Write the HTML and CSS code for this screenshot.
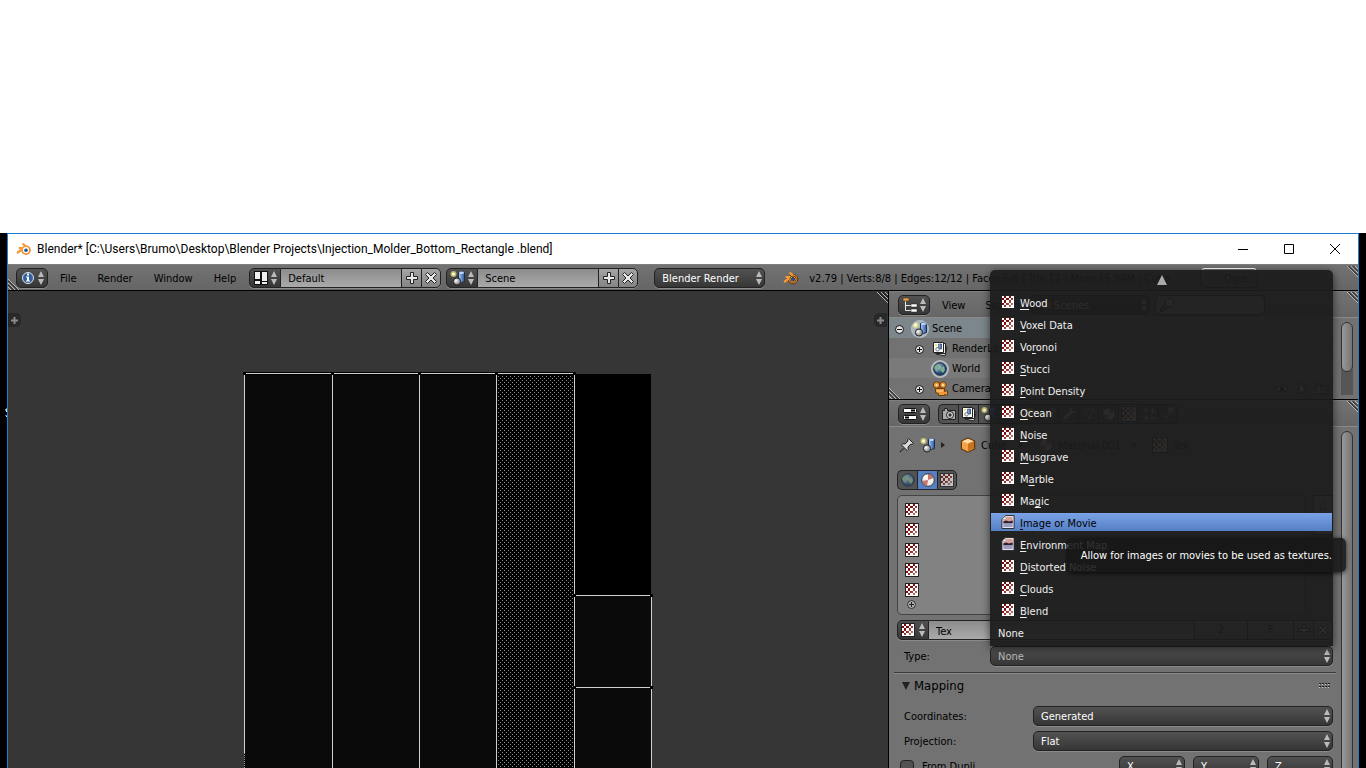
FILE: index.html
```html
<!DOCTYPE html>
<html lang="en">
<head>
<meta charset="utf-8">
<title>Blender</title>
<link rel="stylesheet" href="styles.css">
</head>
<body>
<svg class="defs" aria-hidden="true">
  <defs>
    <linearGradient id="g-blue" x1="0" x2="1"><stop offset="0" stop-color="#a9cbf5"/><stop offset="1" stop-color="#2c569c"/></linearGradient>
    <radialGradient id="g-ball" cx=".35" cy=".35"><stop offset="0" stop-color="#fff"/><stop offset="1" stop-color="#999"/></radialGradient>
    <radialGradient id="g-world" cx=".4" cy=".35"><stop offset="0" stop-color="#a9cde8"/><stop offset="1" stop-color="#24446f"/></radialGradient>
    <linearGradient id="g-check" gradientUnits="userSpaceOnUse" x1="2" y1="2" x2="13" y2="13"><stop offset=".3" stop-color="#780c0c"/><stop offset="1" stop-color="#d8aaa2"/></linearGradient>
    <pattern id="stipple" width="4" height="4" patternUnits="userSpaceOnUse"><path fill="#8c8c8c" d="M2 1h1v1h-1zM0 3h1v1h-1z"/></pattern>
  </defs>
  <symbol id="i-check" viewBox="0 0 14 14"><path fill="#222" d="M0 0h14v14H0z"/><path fill="#fff" d="M1 1h12v12H1z"/><path fill="url(#g-check)" d="M3 1h2v2H3zM8 1h2v2H8zM1 3h2v2H1zM5 3h3v2H5zM10 3h2v2h-2zM3 5h2v3H3zM8 5h2v3H8zM1 8h2v2H1zM5 8h3v2H5zM10 8h2v2h-2zM3 10h2v2H3zM8 10h2v2H8z"/></symbol>
  <symbol id="i-image" viewBox="0 0 14 15"><path fill="#eee" stroke="#222" d="M4.500.5h9v14H.5v-10z"/><path fill="#fff" stroke="#777" stroke-width=".6" d="M4.500.8v4h-4z"/><path fill="#d8a09a" d="M5 2h7v6H2V5h3z"/><path fill="#2a2230" d="M2 7l3-1 3 1 4-1v3H2z"/><path fill="#9c9cc8" d="M2 9h10v4H2z"/></symbol>
  <symbol id="i-updown" viewBox="0 0 6 14"><path d="M3 0l3 6H0zM3 14L0 8h6z"/></symbol>
  <symbol id="i-plus" viewBox="0 0 14 14"><path fill="#e8e8e8" stroke="#222" d="M5.500 1.500h3v4h4v3h-4v4h-3v-4h-4v-3h4z"/></symbol>
  <symbol id="i-x" viewBox="0 0 14 14"><path fill="#e8e8e8" stroke="#222" d="M3.500 1.500L7 5l3.500-3.500 2 2L9 7l3.500 3.500-2 2L7 9l-3.500 3.500-2-2L5 7 1.500 3.500z"/></symbol>
  <symbol id="i-blender" viewBox="0 0 16 14"><g class="edge"><path fill="none" stroke-width="3.400" stroke-linecap="round" d="M1.800 10.500L8 6H3.500M7 2.500L12 6"/><circle cx="10" cy="8.200" r="5.200"/></g><circle cx="10" cy="8.200" r="4.800" fill="#f08a24"/><path fill="none" stroke="#f59a34" stroke-width="2.200" stroke-linecap="round" d="M1.800 10.500L8 6H3.500M7.200 2.200L12 6"/><circle cx="10" cy="8.200" r="3.100" fill="#fff"/><circle cx="10" cy="8.200" r="1.800" fill="#20549c"/></symbol>
  <symbol id="i-scene" viewBox="0 0 16 16"><circle cx="3.500" cy="4" r="3" fill="#f5ef83" opacity=".65"/><circle cx="3.500" cy="4" r="1.500" fill="#ffffd0"/><path fill="url(#g-blue)" stroke="#1c2c50" d="M8.500 2.500q3-2 6 0v9q-3 2-6 0z"/><ellipse cx="11.500" cy="2.800" rx="2.500" ry="1.200" fill="#bcd8fa"/><circle cx="7" cy="11.500" r="3.600" fill="url(#g-ball)" stroke="#222"/></symbol>
  <symbol id="i-world" viewBox="0 0 16 16"><circle cx="8" cy="8" r="6.300" fill="url(#g-world)" stroke="#1c2b44"/><path fill="#7fb08a" d="M3 5l3-2 2 1-1 3-2 1 1 3-2-1-2-3zM9 7l3-2 1 4-2 3-2-2z"/></symbol>
  <symbol id="i-material" viewBox="0 0 16 16"><circle cx="8" cy="8" r="6.300" fill="#f4ecea" stroke="#333"/><path fill="#b5594c" d="M8 2q4 0 5.500 4L8 8zM8 8l-1 6q-4-1-5-5z" opacity=".8"/><circle cx="6" cy="5" r="2" fill="#fff" opacity=".7"/></symbol>
  <symbol id="i-layers" viewBox="0 0 16 16"><path fill="#ddd" stroke="#222" d="M6 4l9 2-2 9-9-2z"/><path fill="#eee" stroke="#222" d="M3.500 2.500h10v10h-10z"/><path fill="#fff" stroke="#222" d="M1.500 1.500h10v10h-10z"/><path fill="url(#g-blue)" stroke="#234" stroke-width=".6" d="M6.500 3h3v5h-3z"/><circle cx="5.500" cy="8.300" r="1.800" fill="#eee" stroke="#333" stroke-width=".6"/><circle cx="4" cy="4" r="1" fill="#e6da50"/></symbol>
  <symbol id="i-camera" viewBox="0 0 16 16"><g fill="#ec9a3c" stroke="#6b3d0c"><circle cx="4.500" cy="4" r="3.200"/><circle cx="11" cy="4" r="3.200"/><path d="M3.500 7.500h9v3l3-1v5l-3-1v1h-6v-2l-3-1z"/></g><circle cx="4.500" cy="4" r="1" fill="#fff0c8"/><circle cx="11" cy="4" r="1" fill="#fff0c8"/><path d="M5 10h6" stroke="#ffd59a"/></symbol>
  <symbol id="i-photo" viewBox="0 0 16 14"><path fill="#aaa" stroke="#222" d="M1.500 3.500h2v-2h3v2h8v9h-13z"/><circle cx="9" cy="8" r="3.500" fill="#ddd" stroke="#222"/><circle cx="9" cy="8" r="1.700" fill="#333"/></symbol>
  <symbol id="i-cube" viewBox="0 0 14 14"><path fill="#f2a24a" stroke="#5c3208" d="M7 .8l5.800 2.700v7L7 13.300 1.200 10.500v-7z"/><path fill="#ffd9a0" d="M7 1.500l5 2.200-5 2.200-5-2.200z"/><path fill="#c9731c" d="M7 6l5.200-2.200v6.300L7 12.500z"/></symbol>
  <symbol id="i-pin" viewBox="0 0 16 16"><path fill="#d8d8d8" stroke="#222" d="M9.500 1.500l5 5-1.500 1-1-.5-3 3 .3 2.500-1 1L5.500 11 2 14.500l-1 .5.500-1L5 10.500 2.500 7.800l1-1L6 7l3-3-.5-1z"/></symbol>
  <symbol id="i-search" viewBox="0 0 16 16"><path stroke="#111" stroke-width="4" stroke-linecap="round" d="M3 13l4-4"/><path stroke="#b87858" stroke-width="2" stroke-linecap="round" d="M3 13l4-4"/><circle cx="10.500" cy="5.500" r="4.500" fill="#b8c0c8" stroke="#111"/></symbol>
  <symbol id="i-grip" viewBox="0 0 11 11"><path fill="none" stroke="#b8b8b8" d="M0 0l11 11M4 0l7 7M8 0l3 3"/><path fill="none" stroke="#111" d="M1.500 0L11 9.500M5.500 0L11 5.500"/></symbol>
  <symbol id="i-grip-low" viewBox="0 0 11 11"><path fill="none" stroke="#b8b8b8" d="M0 0l11 11M0 4l7 7M0 8l3 3"/><path fill="none" stroke="#111" d="M0 1.500L9.500 11M0 5.500L5.500 11"/></symbol>
  <symbol id="i-node" viewBox="0 0 11 11"><circle cx="5.500" cy="5.500" r="4" fill="#e4e4e4" stroke="#111"/><path stroke="#111" d="M3 5.500h5M5.500 3v5"/></symbol>
  <symbol id="i-minus" viewBox="0 0 11 11"><circle cx="5.500" cy="5.500" r="4" fill="#e4e4e4" stroke="#111"/><path stroke="#111" d="M3 5.500h5"/></symbol>
  <symbol id="i-arrow" viewBox="0 0 4 6"><path fill="#222" d="M0 0l4 3-4 3z"/></symbol>
  <symbol id="i-tab" viewBox="0 0 7 7"><path fill="#8a8a8a" d="M2.500 0h2v2.500H7v2H4.500V7h-2V4.500H0v-2h2.500z"/></symbol>
</svg>

<div class="desktop">
<svg class="sliver" viewBox="0 0 3 9" aria-hidden="true"><path fill="#6a7f92" d="M1 0h2v1H1zM0 1h1v2H0zM0 7h2v1H0z"/><path fill="#e8d070" d="M1 1h2v2H1z"/><path fill="#ddd" d="M1 3h1v1H1zM1 8h2v1H1z"/></svg>
<main class="window">
  <div class="titlebar">
    <svg class="logo"><use href="#i-blender"/></svg>
    <h1>Blender* [C:\Users\Brumo\Desktop\Blender Projects\Injection_Molder_Bottom_Rectangle .blend]</h1>
    <button class="winbtn" aria-label="Minimize"><svg viewBox="0 0 10 10"><path d="M0 5.500h10"/></svg></button>
    <button class="winbtn" aria-label="Maximize"><svg viewBox="0 0 10 10"><path d="M.5.500h9v9h-9z"/></svg></button>
    <button class="winbtn" aria-label="Close"><svg viewBox="0 0 10 10"><path d="M0 0l10 10M10 0L0 10"/></svg></button>
  </div>

  <header class="bar info">
    <svg class="grip bottom-left"><use href="#i-grip-low"/></svg>
    <svg class="grip top-right"><use href="#i-grip"/></svg>
    <button class="type" aria-label="Info editor"><svg class="ic" viewBox="0 0 16 16"><circle cx="8" cy="8" r="5.500" fill="#34609c" stroke="#dce6f2"/><path fill="#fff" d="M7 3.500h2v2H7zM6 6.500h3v4h1v1H6v-1h1v-3H6z"/></svg><svg class="ud"><use href="#i-updown"/></svg></button>
    <nav class="menus"><button>File</button><button>Render</button><button>Window</button><button>Help</button></nav>
    <div class="group">
      <button class="type" aria-label="Screen layout"><svg class="ic" viewBox="0 0 16 16"><path fill="#111" d="M1 1h14v14H1z"/><path fill="#f0f0f0" d="M2 2h5v7H2zM2 11h5v3H2zM9 2h5v9H9zM9 12h5v2H9z"/></svg><svg class="ud"><use href="#i-updown"/></svg></button>
      <input aria-label="Screen" value="Default"><button class="sq" aria-label="Add screen"><svg><use href="#i-plus"/></svg></button><button class="sq" aria-label="Delete screen"><svg><use href="#i-x"/></svg></button>
    </div>
    <div class="group second">
      <button class="type" aria-label="Browse scene"><svg class="ic"><use href="#i-scene"/></svg><svg class="ud"><use href="#i-updown"/></svg></button>
      <input aria-label="Scene" value="Scene"><button class="sq" aria-label="Add scene"><svg><use href="#i-plus"/></svg></button><button class="sq" aria-label="Delete scene"><svg><use href="#i-x"/></svg></button>
    </div>
    <span class="select engine"><select aria-label="Render engine"><option>Blender Render</option></select><svg class="ud"><use href="#i-updown"/></svg></span>
    <svg class="logo dark"><use href="#i-blender"/></svg>
    <p class="stats">v2.79 | Verts:8/8 | Edges:12/12 | Faces:6/6 | Tris:12 | Mem:15.94M | Cube</p>
    <button class="ogre">Ogre</button>
  </header>

  <div class="work">
    <section class="uv">
      <svg class="grip top-right"><use href="#i-grip"/></svg>
      <svg class="canvas" aria-label="UV layout">
        <path fill="#0a0a0a" d="M236 83h252v600H236z"/>
        <path fill="#000" d="M488 83h155v222H488z"/>
        <path fill="#000" d="M488 83h78v600h-78z"/>
        <path fill="url(#stipple)" d="M490 85h75v600h-75z"/>
        <path fill="#0a0a0a" d="M567 305h76v400h-76z"/>
        <path fill="none" stroke="#000" stroke-width="3" d="M236 82.500h331"/>
        <path fill="none" stroke="#d0d0d0" d="M237 82.500h329M236.500 84v378M324.500 84v600M411.500 84v600M488.500 84v600M566.500 84v600M567 304.500h76M567 396.500h76M643.500 305v400"/>
        <path stroke="#999" stroke-dasharray="1 1" d="M236.500 462v300"/>
        <path d="M235 81h3v3h-3zM323 81h3v3h-3zM410 81h3v3h-3zM487 81h3v3h-3zM565 81h3v3h-3zM565 303h3v3h-3zM642 303h3v3h-3zM565 395h3v3h-3zM642 395h3v3h-3z"/>
      </svg>
      <button class="tab left" aria-label="Show tool shelf"><svg><use href="#i-tab"/></svg></button>
      <button class="tab right" aria-label="Show properties"><svg><use href="#i-tab"/></svg></button>
    </section>

    <aside class="side">
      <section class="outliner">
        <svg class="grip top-right"><use href="#i-grip"/></svg>
        <svg class="grip bottom-left"><use href="#i-grip-low"/></svg>
        <header class="bar">
          <button class="type" aria-label="Outliner"><svg class="ic" viewBox="0 0 16 16"><path fill="none" stroke="#e8e8e8" d="M3.500 4v9.500H9M3.500 8.500H9"/><path fill="#f0a040" stroke="#222" stroke-width=".5" d="M1 1h6v3H1z"/><path fill="#fff" stroke="#222" stroke-width=".5" d="M9 7h6v3H9zM9 12h6v3H9z"/></svg><svg class="ud"><use href="#i-updown"/></svg></button>
          <nav class="menus"><button>View</button><button>Search</button></nav>
          <span class="select scenes"><select aria-label="Display mode"><option>All Scenes</option></select><svg class="ud"><use href="#i-updown"/></svg></span>
          <label class="find"><svg class="ic"><use href="#i-search"/></svg><input aria-label="Filter"></label>
        </header>
        <div class="treewrap">
          <ul class="tree">
            <li class="on"><svg class="node"><use href="#i-minus"/></svg><svg class="ic halo"><use href="#i-scene"/></svg>Scene</li>
            <li class="sub"><svg class="node"><use href="#i-node"/></svg><svg class="ic"><use href="#i-layers"/></svg>RenderLayers</li>
            <li class="sub"><i class="node"></i><svg class="ic halo"><use href="#i-world"/></svg>World</li>
            <li class="sub"><svg class="node"><use href="#i-node"/></svg><svg class="ic"><use href="#i-camera"/></svg>Camera
              <span class="toggles"><svg viewBox="0 0 14 14"><path fill="#ccc" stroke="#222" d="M1 7q6-7 12 0-6 6-12 0z"/><circle cx="7" cy="7" r="2.200"/></svg><svg viewBox="0 0 14 14"><path fill="#ddd" stroke="#222" d="M4 1v11l3-3 2 4 1-1-1.500-4H12z"/></svg><svg viewBox="0 0 16 14"><use href="#i-photo"/></svg></span></li>
          </ul>
          <div class="scroll"><i class="thumb short"></i></div>
        </div>
      </section>

      <section class="props">
        <svg class="grip top-right"><use href="#i-grip"/></svg>
        <header class="bar">
          <button class="type" aria-label="Properties"><svg class="ic" viewBox="0 0 16 16"><rect x="1.500" y="2.500" width="13" height="4" rx="1" fill="#fff" stroke="#111"/><path d="M9 3.500h4v2H9z"/><rect x="1.500" y="9.500" width="13" height="4" rx="1" fill="#fff" stroke="#111"/><path d="M3 10.500h4v2H3z"/></svg><svg class="ud"><use href="#i-updown"/></svg></button>
          <div class="contexts">
            <button aria-label="Render"><svg><use href="#i-photo"/></svg></button><button aria-label="Render layers"><svg><use href="#i-layers"/></svg></button><button aria-label="Scene"><svg><use href="#i-scene"/></svg></button><button aria-label="World"><svg><use href="#i-world"/></svg></button><button aria-label="Object"><svg><use href="#i-cube"/></svg></button><button aria-label="Constraints"><svg viewBox="0 0 16 16"><path fill="none" stroke="#bbb" stroke-width="2" d="M2 11l4-4 2 2-3 4zM8 6l3-3 3 2-4 4z"/></svg></button><button aria-label="Modifiers"><svg viewBox="0 0 16 16"><path stroke="#bcd" stroke-width="3" d="M3 13l7-7"/><path fill="none" stroke="#bcd" stroke-width="2" d="M10 2q-2 5 4 4"/></svg></button><button aria-label="Data"><svg viewBox="0 0 16 16"><path fill="none" stroke="#bbb" d="M3 3h10l-5 10z"/></svg></button><button aria-label="Material"><svg><use href="#i-material"/></svg></button><button class="on" aria-label="Texture"><svg><use href="#i-check"/></svg></button><button aria-label="Particles"><svg viewBox="0 0 16 16"><path stroke="#dda" d="M2 4h5M4.500 2v5M9 5h5M11.500 2v5M3 12h5M5.500 9v5M10 12h5"/></svg></button><button aria-label="Physics"><svg viewBox="0 0 16 16"><path fill="none" stroke="#89b" stroke-width="2" d="M2 7l4 5 5-7"/><circle cx="11" cy="4" r="3" fill="#bbb"/></svg></button>
          </div>
        </header>
        <div class="propwrap">
          <div class="panel">
            <div class="crumbs"><svg class="ic"><use href="#i-pin"/></svg><svg class="ic"><use href="#i-scene"/></svg><svg class="ar"><use href="#i-arrow"/></svg><svg class="ic"><use href="#i-cube"/></svg><span>Cube</span><svg class="ar"><use href="#i-arrow"/></svg><svg class="ic"><use href="#i-material"/></svg><span>Material.001</span><svg class="ar"><use href="#i-arrow"/></svg><svg class="ic"><use href="#i-check"/></svg><span>Tex</span></div>
            <div class="contexts small"><button aria-label="World textures"><svg><use href="#i-world"/></svg></button><button class="on" aria-label="Material textures"><svg><use href="#i-material"/></svg></button><button aria-label="Other textures"><svg class="chk"><use href="#i-check"/></svg></button></div>
            <div class="slots">
              <ul><li><svg><use href="#i-check"/></svg></li><li><svg><use href="#i-check"/></svg></li><li><svg><use href="#i-check"/></svg></li><li><svg><use href="#i-check"/></svg></li><li><svg><use href="#i-check"/></svg></li><li class="more"><svg viewBox="0 0 9 9"><circle cx="4.500" cy="4.500" r="4" fill="#aaa" stroke="#333"/><path stroke="#222" d="M2 4.500h5M4.500 2v5"/></svg></li></ul>
              <div class="steps"><button aria-label="Move up">△</button><button aria-label="Move down">▽</button></div>
            </div>
            <div class="group texid">
              <button class="type" aria-label="Browse texture"><svg class="ic"><use href="#i-check"/></svg><svg class="ud"><use href="#i-updown"/></svg></button>
              <input aria-label="Texture name" value="Tex"><button class="users">2</button><button class="fake">F</button><button class="sq" aria-label="Add texture"><svg><use href="#i-plus"/></svg></button><button class="sq" aria-label="Unlink texture"><svg><use href="#i-x"/></svg></button>
            </div>
            <div class="row typerow">
              <label for="ttype">Type:</label>
              <div class="select open"><select id="ttype"><option>None</option></select><svg class="ud"><use href="#i-updown"/></svg>
                <div class="popup">
                  <svg class="more" viewBox="0 0 10 10"><path fill="#aaa" d="M5 0l5 10H0z"/></svg>
                  <ul>
                    <li><button><svg><use href="#i-check"/></svg><span><u>W</u>ood</span></button></li>
                    <li><button><svg><use href="#i-check"/></svg><span><u>V</u>oxel Data</span></button></li>
                    <li><button><svg><use href="#i-check"/></svg><span>Vo<u>r</u>onoi</span></button></li>
                    <li><button><svg><use href="#i-check"/></svg><span><u>S</u>tucci</span></button></li>
                    <li><button><svg><use href="#i-check"/></svg><span><u>P</u>oint Density</span></button></li>
                    <li><button><svg><use href="#i-check"/></svg><span><u>O</u>cean</span></button></li>
                    <li><button><svg><use href="#i-check"/></svg><span><u>N</u>oise</span></button></li>
                    <li><button><svg><use href="#i-check"/></svg><span><u>M</u>usgrave</span></button></li>
                    <li><button><svg><use href="#i-check"/></svg><span>M<u>a</u>rble</span></button></li>
                    <li><button><svg><use href="#i-check"/></svg><span>Ma<u>g</u>ic</span></button></li>
                    <li class="on"><button><svg><use href="#i-image"/></svg><span><u>I</u>mage or Movie</span></button><div class="tip" role="tooltip">Allow for images or movies to be used as textures.</div></li>
                    <li><button><svg><use href="#i-image"/></svg><span><u>E</u>nvironment Map</span></button></li>
                    <li><button><svg><use href="#i-check"/></svg><span><u>D</u>istorted Noise</span></button></li>
                    <li><button><svg><use href="#i-check"/></svg><span><u>C</u>louds</span></button></li>
                    <li><button><svg><use href="#i-check"/></svg><span><u>B</u>lend</span></button></li>
                    <li class="none"><button><span>None</span></button></li>
                  </ul>
                </div>
              </div>
            </div>
            <h2 class="heading"><svg class="tri" viewBox="0 0 8 8"><path fill="#222" d="M0 0h8L4 8z"/></svg>Mapping<svg class="dots" viewBox="0 0 11 5"><path stroke="#222" stroke-dasharray="2 1" d="M0 .5h11M0 3.500h11"/><path stroke="#ccc" stroke-dasharray="1 2" d="M0 1.500h11M0 4.500h11"/></svg></h2>
            <div class="row"><label for="coords">Coordinates:</label><div class="select"><select id="coords"><option>Generated</option></select><svg class="ud"><use href="#i-updown"/></svg></div></div>
            <div class="row"><label for="proj">Projection:</label><div class="select"><select id="proj"><option>Flat</option></select><svg class="ud"><use href="#i-updown"/></svg></div></div>
            <div class="row dupli"><label class="tick"><input type="checkbox">From Dupli</label>
              <div class="axes"><span class="select"><select aria-label="X mapping"><option>X</option></select><svg class="ud"><use href="#i-updown"/></svg></span><span class="select"><select aria-label="Y mapping"><option>Y</option></select><svg class="ud"><use href="#i-updown"/></svg></span><span class="select"><select aria-label="Z mapping"><option>Z</option></select><svg class="ud"><use href="#i-updown"/></svg></span></div></div>
          </div>
          <div class="scroll"><i class="thumb"></i></div>
        </div>
      </section>
    </aside>
  </div>
</main>
</div>
</body>
</html>
```
FILE: styles.css
```css
* { box-sizing: border-box; }
body {
  margin: 0;
  height: 100vh;
  overflow: hidden;
  background: #fff;
  padding-top: 233px;
  font: 11px/14px "DejaVu Sans Condensed", "DejaVu Sans", sans-serif;
  color: #000;
}
ul { list-style: none; margin: 0; padding: 0; }
h1, h2, p { margin: 0; font-weight: normal; }
button, input, select { font: inherit; color: inherit; margin: 0; padding: 0; border: 0; background: none; border-radius: 0; outline: 0; }
svg { display: block; flex: none; }
.defs { position: absolute; width: 0; height: 0; }

.desktop { position: relative; height: 100%; background: #000; padding: 0 7px; }
.sliver { position: absolute; left: 5px; top: 175px; width: 3px; height: 9px; }
.window {
  position: relative;
  display: flex;
  flex-direction: column;
  height: 100%;
  border: 1px solid #1c7ed2;
  border-bottom: 0;
}

.titlebar { display: flex; align-items: center; height: 30px; background: #fff; padding-left: 8px; flex: none; }
.titlebar h1 { flex: 1; padding-left: 5px; font: 12px/16px Roboto, "Noto Sans", sans-serif; white-space: nowrap; }
.logo { width: 16px; height: 14px; }
.edge { fill: none; stroke: none; }
.dark { fill: #5c3208; stroke: #5c3208; }
.winbtn { width: 46px; height: 30px; display: grid; place-items: center; }
.winbtn svg { width: 10px; height: 10px; fill: none; stroke: #000; }

.bar {
  position: relative;
  display: flex;
  align-items: center;
  height: 26px;
  flex: none;
  padding-left: 9px;
  background: linear-gradient(#727272, #666);
  border-top: 1px solid #7e7e7e;
}
.info { height: 27px; padding-left: 8px; border-bottom: 1px solid #000; }

.grip { position: absolute; width: 11px; height: 11px; z-index: 1; }
.grip.top-right { top: 1px; right: 0; }
.grip.bottom-left { bottom: 0; left: 0; }

.type {
  display: flex;
  align-items: center;
  justify-content: space-between;
  width: 32px;
  height: 20px;
  padding: 0 3px;
  border: 1px solid #222;
  border-radius: 5px;
  background: linear-gradient(#525252, #363636);
  box-shadow: 0 1px 0 #8a8a8a;
}
.ic { width: 16px; height: 16px; }
.ud { width: 6px; height: 14px; fill: #bbb; }

.menus { display: flex; gap: 21px; padding: 2px 13px 0 12px; }

.group { display: flex; }
.group.second { margin-left: 5px; }
.group .type { border-radius: 5px 0 0 5px; }
.group input {
  width: 120px;
  height: 20px;
  padding: 2px 7px 0;
  border: solid #222;
  border-width: 1px 0;
  background: linear-gradient(#8c8c8c, #aaa);
  box-shadow: 0 1px 0 #8a8a8a;
}
.sq, .users, .fake {
  display: grid;
  place-items: center;
  width: 20px;
  height: 20px;
  border: 1px solid #222;
  border-right-width: 0;
  background: linear-gradient(#a4a4a4, #848484);
  box-shadow: 0 1px 0 #8a8a8a;
}
.sq svg { width: 14px; height: 14px; }
.sq:last-child { border-right-width: 1px; border-radius: 0 5px 5px 0; }

.select { position: relative; display: block; height: 20px; }
.select select {
  appearance: none;
  display: block;
  width: 100%;
  height: 20px;
  padding: 2px 7px 0;
  border: 1px solid #222;
  border-radius: 5px;
  background: linear-gradient(#525252, #363636);
  box-shadow: 0 1px 0 #8a8a8a;
  color: #fff;
}
.select > .ud { position: absolute; right: 3px; top: 3px; pointer-events: none; }
.engine { width: 111px; margin: 0 18px 0 16px; }
.stats { padding: 2px 0 0 10px; white-space: nowrap; }
.ogre {
  width: 58px;
  height: 20px;
  margin: 0 100px 0 auto;
  padding: 2px 9px 0 0;
  border: 1px solid #222;
  border-top-color: #fff;
  border-radius: 5px;
  text-align: right;
}

.work { flex: 1; min-height: 0; display: grid; grid-template-columns: 880fr 470fr; }
.uv { position: relative; background: #363636; overflow: hidden; min-width: 0; }
.canvas { width: 100%; height: 100%; }
.tab { position: absolute; top: 22px; width: 13px; height: 14px; display: grid; place-items: center; background: #282828; }
.tab svg { width: 7px; height: 7px; }
.tab.left { left: 0; border-radius: 0 5px 5px 0; }
.tab.right { right: 1px; border-radius: 5px 0 0 5px; }

.side { display: flex; flex-direction: column; min-width: 0; border-left: 1px solid #000; background: #727272; }
.outliner { position: relative; border-bottom: 1px solid #000; flex: none; }
.outliner .menus { gap: 20px; padding-right: 11px; }
.scenes { width: 120px; }
.find { position: relative; margin-left: 5px; }
.find .ic { position: absolute; left: 4px; top: 2px; }
.find input { width: 110px; height: 20px; display: block; border: 1px solid #222; border-radius: 5px; background: #999; padding-left: 22px; }
.treewrap { display: flex; border-top: 1px solid #8a8a8a; padding-bottom: 1px; }
.tree { flex: 1; min-width: 0; }
.tree li { display: flex; align-items: center; height: 20px; padding: 2px 0 0 5px; gap: 4px; }
.tree li:nth-child(odd) { background: #7a7a7a; }
.tree li.on { background: #7c868b; }
.tree .sub { padding-left: 25px; }
.tree .ic { margin-left: 3px; }
.halo { border-radius: 50%; box-shadow: 0 0 0 1px #b9c2cc; background: #aab3bb; }
.node { width: 11px; height: 11px; }
.toggles { display: flex; gap: 6px; margin-left: auto; padding-right: 4px; }
.toggles svg { width: 14px; height: 14px; }

.scroll { width: 25px; padding: 4px 5px 3px 8px; display: flex; flex: none; }
.outliner .scroll { background: linear-gradient(#565656, #565656) 8px 20px / 12px 57px no-repeat; }
.thumb { flex: 1; border: 1px solid #333; border-radius: 7px; background: linear-gradient(90deg, #999, #747474); }
.thumb.short { height: 50px; }

.props { position: relative; flex: 1; min-height: 0; display: flex; flex-direction: column; }
.contexts { display: flex; margin-left: 8px; }
.contexts button { width: 20px; height: 20px; display: grid; place-items: center; border: 1px solid #222; border-right-width: 0; background: #535353; }
.contexts button:first-child { border-radius: 5px 0 0 5px; }
.contexts button:last-child { border-radius: 0 5px 5px 0; border-right-width: 1px; }
.contexts button.on { background: #5680c4; }
.contexts svg { width: 16px; height: 16px; }
.contexts .chk { width: 14px; height: 14px; }
.contexts.small { margin: 8px 0 0; }
.contexts.small button:not(.on) svg { opacity: .65; }

.propwrap { flex: 1; display: flex; min-height: 0; border-top: 1px solid #8a8a8a; }
.propwrap .scroll { padding-bottom: 0; }
.panel { flex: 1; min-width: 0; padding-left: 8px; }
.crumbs { display: flex; align-items: center; height: 35px; padding-left: 2px; gap: 5px; }
.crumbs .ar { width: 4px; height: 6px; margin-right: 10px; }
.crumbs span { padding: 2px 7px 0 0; }
.slots { display: flex; height: 120px; margin-top: 5px; }
.slots ul { flex: 1; border: 1px solid #444; border-radius: 5px; background: #828282; padding: 4px 7px; }
.slots li { height: 20px; display: flex; align-items: center; }
.slots li svg { width: 14px; height: 14px; }
.slots .more { height: 9px; padding-left: 2px; }
.slots .more svg { width: 9px; height: 9px; }
.steps { margin-left: 8px; width: 20px; }
.steps button { display: block; width: 20px; height: 20px; border: 1px solid #222; background: #999; }
.texid { margin-top: 5px; }
.texid .ic { width: 14px; height: 14px; }
.group.texid input { flex: 1; width: auto; min-width: 0; }
.users { width: 53px; }
.fake { width: 46px; }

.row { display: flex; align-items: center; height: 20px; margin-bottom: 5px; padding-left: 7px; }
.row > label { flex: 0 0 129px; padding-top: 2px; }
.row > .select { flex: 1; min-width: 0; }
.typerow { margin: 6px 0; }
.typerow > label { flex-basis: 86px; }
.open select { color: #bbb; }

.heading { display: flex; align-items: center; height: 24px; margin: 0 -3px 10px; padding: 2px 6px 0 8px; border-top: 1px solid #3a3a3a; box-shadow: inset 0 1px 0 #8c8c8c; font-size: 13px; }
.tri { width: 8px; height: 8px; margin: 0 4px 0 0; }
.dots { width: 11px; height: 5px; margin-left: auto; }

.row > .tick { display: flex; align-items: center; gap: 8px; flex: 1; }
.dupli { padding-left: 3px; }
.tick input { appearance: none; width: 14px; height: 14px; border: 1px solid #222; border-radius: 4px; background: #525252; }
.axes { display: flex; gap: 8px; flex: 0 0 214px; }
.axes .select { flex: 1; }

.popup {
  position: absolute;
  z-index: 5;
  left: 0;
  right: 0;
  bottom: 100%;
  padding: 5px 1px;
  border-radius: 5px 5px 0 0;
  background: rgba(27, 27, 27, .93);
  box-shadow: 0 2px 8px rgba(0, 0, 0, .6);
  color: #f0f0f0;
}
.popup .more { width: 10px; height: 10px; margin: 0 auto 8px; }
.popup ul { display: grid; gap: 4px; }
.popup li { position: relative; }
.popup button { display: flex; align-items: center; gap: 5px; width: 100%; height: 18px; padding-left: 10px; text-align: left; }
.popup button svg { width: 14px; height: 14px; }
.popup button span { padding-top: 4px; }
.popup .on button { background: linear-gradient(#7ba2e6, #5680c4); color: #000; }
.popup .none button { padding-left: 7px; }
.popup u { text-decoration-thickness: 1px; text-underline-offset: 2px; text-decoration-skip-ink: none; }
.tip {
  position: absolute;
  z-index: 2;
  top: 25px;
  right: -14px;
  padding: 11px 14px 9px 13px;
  border-radius: 5px;
  background: rgba(23, 23, 23, .88);
  box-shadow: 0 1px 5px rgba(0, 0, 0, .8);
  color: #fff;
  white-space: nowrap;
}
```
